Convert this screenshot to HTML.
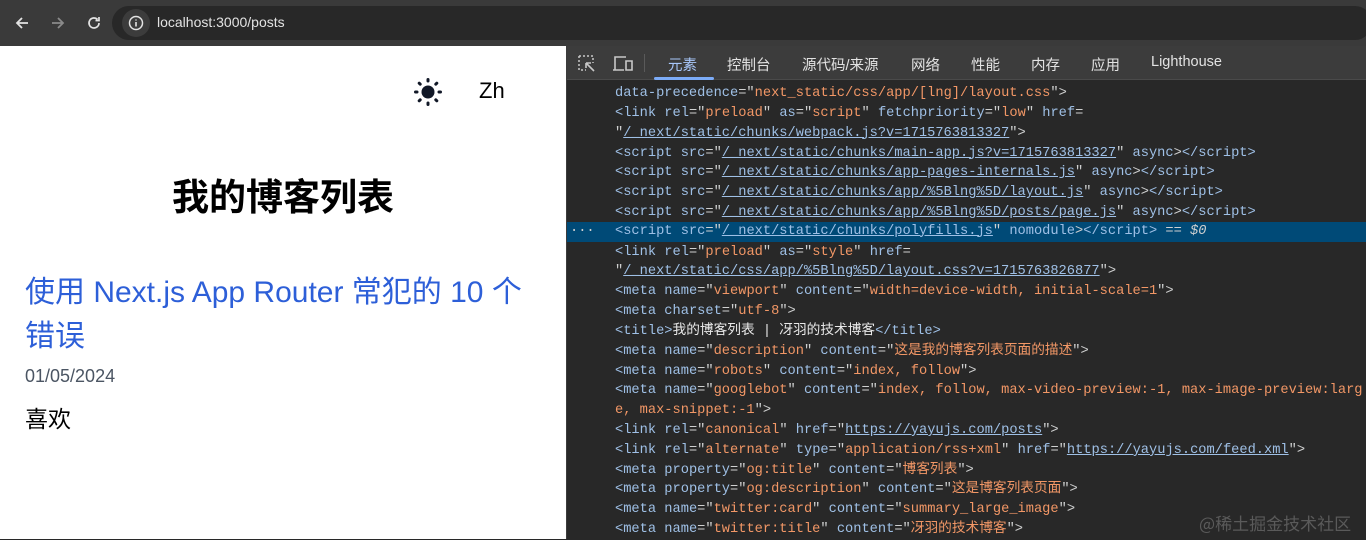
<!DOCTYPE html>
<html><head><meta charset="utf-8">
<style>
*{margin:0;padding:0;box-sizing:border-box}
body{width:1366px;height:539px;overflow:hidden;background:#282828;position:relative;font-family:"Liberation Sans","Noto Sans CJK SC",sans-serif}
#chrome{position:absolute;left:0;top:0;width:1366px;height:46px;background:#3a3a3a}
#addr{position:absolute;left:112px;top:6px;width:1260px;height:34px;border-radius:17px;background:#282828}
#addr .i{position:absolute;left:10px;top:3px;width:28px;height:28px;border-radius:14px;background:#3c3c3c}
#addr .t{position:absolute;left:45px;top:8px;color:#e3e3e3;font-size:14px}
#page{position:absolute;left:0;top:46px;width:566px;height:493px;background:#fff}
#dt{position:absolute;left:566px;top:46px;width:800px;height:493px;background:#282828;border-left:1px solid #3c3c3c}
#tb{position:absolute;left:0;top:0;width:800px;height:34px;background:#3c3c3c;border-bottom:1px solid #4a4a4a}
.tab{position:absolute;top:8px;color:#e3e3e3;font-size:14.5px;font-family:"Liberation Sans","Noto Sans CJK SC",sans-serif}
.code{position:absolute;left:0;width:800px;height:20px;font-family:"Liberation Mono","Noto Sans CJK SC",monospace;font-size:13.7px;line-height:20px;color:#cfd0d0;white-space:pre;padding-left:48px}
.tg{color:#9fc0e6}.an{color:#9fc0e6}.av{color:#f29766}.ln{color:#9fc0e6;text-decoration:underline}.tx{color:#e8e8e8}
.sel{background:#004a77}
</style></head><body>
<div id="chrome">
<svg style="position:absolute;left:14px;top:15px" width="16" height="16" viewBox="0 0 16 16"><path d="M14 8H3M8 3L3 8l5 5" stroke="#e3e3e3" stroke-width="1.8" fill="none"/></svg>
<svg style="position:absolute;left:50px;top:15px" width="16" height="16" viewBox="0 0 16 16"><path d="M2 8h11M8 3l5 5-5 5" stroke="#8a8a8a" stroke-width="1.8" fill="none"/></svg>
<svg style="position:absolute;left:86px;top:15px" width="16" height="16" viewBox="0 0 16 16"><path d="M13 8a5 5 0 1 1-1.5-3.6M13 2v3.5H9.5" stroke="#e3e3e3" stroke-width="1.7" fill="none"/></svg>
<div id="addr"><div class="i"><svg width="28" height="28" viewBox="0 0 28 28"><circle cx="14" cy="14" r="6.5" stroke="#e3e3e3" stroke-width="1.5" fill="none"/><path d="M14 13v4.5M14 10.5v1" stroke="#e3e3e3" stroke-width="1.6"/></svg></div><div class="t">localhost:3000/posts</div></div>
</div>
<div id="page">
<svg style="position:absolute;left:413px;top:31px" width="30" height="30" viewBox="0 0 30 30"><circle cx="15" cy="15" r="6.5" fill="#111827"/><g stroke="#111827" stroke-width="3" stroke-linecap="round"><path d="M15 2.5v1.5M15 26v1.5M2.5 15h1.5M26 15h1.5M6.2 6.2l1 1M22.8 22.8l1 1M6.2 23.8l1-1M22.8 7.2l1-1"/></g></svg>
<div style="position:absolute;left:479px;top:32px;font-size:22px;color:#000">Zh</div>
<div style="position:absolute;left:0;width:566px;top:121px;text-align:center;font-size:37px;font-weight:bold;color:#000">我的博客列表</div>
<div style="position:absolute;left:25px;top:225px;width:510px;font-size:30px;line-height:44px;color:#2d5fd8">使用 Next.js App Router 常犯的 10 个错误</div>
<div style="position:absolute;left:25px;top:320px;font-size:18px;color:#4b5563">01/05/2024</div>
<div style="position:absolute;left:25px;top:354px;font-size:23px;color:#000">喜欢</div>
</div>
<div id="dt">
<div id="tb">
<svg style="position:absolute;left:10px;top:8px" width="20" height="20" viewBox="0 0 20 20"><path d="M2 2h14v7M2 2v14h7" stroke="#c8c8c8" stroke-width="1.5" stroke-dasharray="2 2" fill="none"/><path d="M9 9l8 8M9 9h5M9 9v5" stroke="#c8c8c8" stroke-width="1.6" fill="none"/></svg>
<svg style="position:absolute;left:45px;top:8px" width="22" height="20" viewBox="0 0 22 20"><path d="M3 16V3h11M1 16h11M14 7h6v9h-6z" stroke="#c8c8c8" stroke-width="1.6" fill="none"/></svg>
<div style="position:absolute;left:77px;top:8px;width:1px;height:18px;background:#5a5a5a"></div>
<div class="tab" style="left:101px;color:#a8c7fa">元素</div>
<div style="position:absolute;left:87px;top:31px;width:60px;height:3px;background:#7cacf8;border-radius:2px"></div>
<div class="tab" style="left:160px">控制台</div>
<div class="tab" style="left:235px">源代码/来源</div>
<div class="tab" style="left:344px">网络</div>
<div class="tab" style="left:404px">性能</div>
<div class="tab" style="left:464px">内存</div>
<div class="tab" style="left:524px">应用</div>
<div class="tab" style="left:584px">Lighthouse</div>
</div>
<div class="code" style="top:38px"><span class="an">data-precedence</span>="<span class="av">next_static/css/app/[lng]/layout.css</span>"&gt;</div>
<div class="code" style="top:57.8px"><span class="tg">&lt;link</span> <span class="an">rel</span>="<span class="av">preload</span>" <span class="an">as</span>="<span class="av">script</span>" <span class="an">fetchpriority</span>="<span class="av">low</span>" <span class="an">href</span>=</div>
<div class="code" style="top:77.6px">"<span class="ln">/_next/static/chunks/webpack.js?v=1715763813327</span>"&gt;</div>
<div class="code" style="top:97.5px"><span class="tg">&lt;script</span> <span class="an">src</span>="<span class="ln">/_next/static/chunks/main-app.js?v=1715763813327</span>" <span class="an">async</span>&gt;<span class="tg">&lt;/script&gt;</span></div>
<div class="code" style="top:117.3px"><span class="tg">&lt;script</span> <span class="an">src</span>="<span class="ln">/_next/static/chunks/app-pages-internals.js</span>" <span class="an">async</span>&gt;<span class="tg">&lt;/script&gt;</span></div>
<div class="code" style="top:137.1px"><span class="tg">&lt;script</span> <span class="an">src</span>="<span class="ln">/_next/static/chunks/app/%5Blng%5D/layout.js</span>" <span class="an">async</span>&gt;<span class="tg">&lt;/script&gt;</span></div>
<div class="code" style="top:156.9px"><span class="tg">&lt;script</span> <span class="an">src</span>="<span class="ln">/_next/static/chunks/app/%5Blng%5D/posts/page.js</span>" <span class="an">async</span>&gt;<span class="tg">&lt;/script&gt;</span></div>
<div class="code sel" style="top:175.5px"><span style="position:absolute;left:3px;color:#cfd0d0">···</span><span class="tg">&lt;script</span> <span class="an">src</span>="<span class="ln">/_next/static/chunks/polyfills.js</span>" <span class="an">nomodule</span>&gt;<span class="tg">&lt;/script&gt;</span> == <i>$0</i></div>
<div class="code" style="top:196.6px"><span class="tg">&lt;link</span> <span class="an">rel</span>="<span class="av">preload</span>" <span class="an">as</span>="<span class="av">style</span>" <span class="an">href</span>=</div>
<div class="code" style="top:216.4px">"<span class="ln">/_next/static/css/app/%5Blng%5D/layout.css?v=1715763826877</span>"&gt;</div>
<div class="code" style="top:236.2px"><span class="tg">&lt;meta</span> <span class="an">name</span>="<span class="av">viewport</span>" <span class="an">content</span>="<span class="av">width=device-width, initial-scale=1</span>"&gt;</div>
<div class="code" style="top:256px"><span class="tg">&lt;meta</span> <span class="an">charset</span>="<span class="av">utf-8</span>"&gt;</div>
<div class="code" style="top:275.8px"><span class="tg">&lt;title&gt;</span><span class="tx">我的博客列表 | 冴羽的技术博客</span><span class="tg">&lt;/title&gt;</span></div>
<div class="code" style="top:295.7px"><span class="tg">&lt;meta</span> <span class="an">name</span>="<span class="av">description</span>" <span class="an">content</span>="<span class="av">这是我的博客列表页面的描述</span>"&gt;</div>
<div class="code" style="top:315.5px"><span class="tg">&lt;meta</span> <span class="an">name</span>="<span class="av">robots</span>" <span class="an">content</span>="<span class="av">index, follow</span>"&gt;</div>
<div class="code" style="top:335.3px"><span class="tg">&lt;meta</span> <span class="an">name</span>="<span class="av">googlebot</span>" <span class="an">content</span>="<span class="av">index, follow, max-video-preview:-1, max-image-preview:larg</span></div>
<div class="code" style="top:355.1px"><span class="av">e, max-snippet:-1</span>"&gt;</div>
<div class="code" style="top:374.9px"><span class="tg">&lt;link</span> <span class="an">rel</span>="<span class="av">canonical</span>" <span class="an">href</span>="<span class="ln">https://yayujs.com/posts</span>"&gt;</div>
<div class="code" style="top:394.8px"><span class="tg">&lt;link</span> <span class="an">rel</span>="<span class="av">alternate</span>" <span class="an">type</span>="<span class="av">application/rss+xml</span>" <span class="an">href</span>="<span class="ln">https://yayujs.com/feed.xml</span>"&gt;</div>
<div class="code" style="top:414.6px"><span class="tg">&lt;meta</span> <span class="an">property</span>="<span class="av">og:title</span>" <span class="an">content</span>="<span class="av">博客列表</span>"&gt;</div>
<div class="code" style="top:434.4px"><span class="tg">&lt;meta</span> <span class="an">property</span>="<span class="av">og:description</span>" <span class="an">content</span>="<span class="av">这是博客列表页面</span>"&gt;</div>
<div class="code" style="top:454.2px"><span class="tg">&lt;meta</span> <span class="an">name</span>="<span class="av">twitter:card</span>" <span class="an">content</span>="<span class="av">summary_large_image</span>"&gt;</div>
<div class="code" style="top:474px"><span class="tg">&lt;meta</span> <span class="an">name</span>="<span class="av">twitter:title</span>" <span class="an">content</span>="<span class="av">冴羽的技术博客</span>"&gt;</div>
<div style="position:absolute;left:632px;top:464px;font-size:17px;color:#5a5a5a;font-family:'Noto Sans CJK SC',sans-serif">@稀土掘金技术社区</div>
</div>
</body></html>
